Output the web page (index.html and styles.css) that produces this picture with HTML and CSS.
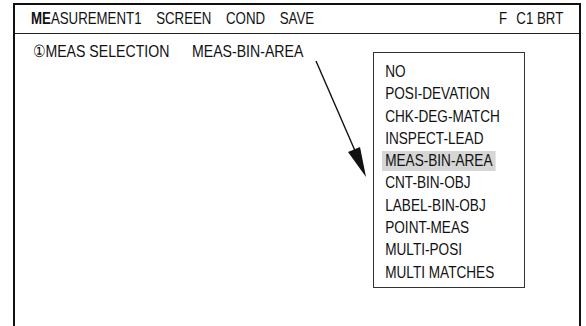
FILE: index.html
```html
<!DOCTYPE html>
<html lang="en">

<head>
  <meta charset="UTF-8">
  <meta name="viewport" content="width=device-width, initial-scale=1.0">
  <title>MEASUREMENT1</title>
  <link rel="stylesheet" href="styles.css">
</head>

<body>
  <div class="screen">
    <div class="header">
      <div class="title narrow">
        <span><b>ME</b>ASUREMENT1</span>
        <span>SCREEN</span>
        <span>COND</span>
        <span>SAVE</span>
      </div>
      <div class="status narrow">
        <span>F</span>
        <span>C1 BRT</span>
      </div>
    </div>
    <div class="content">
      <div class="row">
        <span class="label narrow">&#9312;MEAS SELECTION</span>
        <span class="value narrow">MEAS-BIN-AREA</span>
      </div>
      <ul class="menu">
        <li><span class="narrow">NO</span></li>
        <li><span class="narrow">POSI-DEVATION</span></li>
        <li><span class="narrow">CHK-DEG-MATCH</span></li>
        <li><span class="narrow">INSPECT-LEAD</span></li>
        <li class="active"><span class="narrow">MEAS-BIN-AREA</span></li>
        <li><span class="narrow">CNT-BIN-OBJ</span></li>
        <li><span class="narrow">LABEL-BIN-OBJ</span></li>
        <li><span class="narrow">POINT-MEAS</span></li>
        <li><span class="narrow">MULTI-POSI</span></li>
        <li><span class="narrow">MULTI MATCHES</span></li>
      </ul>
    </div>
  </div>
  <svg class="arrow" width="586" height="326" viewBox="0 0 586 326">
    <line x1="316" y1="61" x2="356" y2="153" stroke="#111" stroke-width="1.4" />
    <polygon points="366,177 360,147 348,152" fill="#111" />
  </svg>
</body>

</html>
```

FILE: styles.css
```css
body,
html {
  width: 100%;
  height: 100%;
  padding: 0;
  margin: 0;
  overflow: hidden;
  background: #fff;
}

body {
  font-family: "Liberation Sans", Arial, sans-serif;
  color: #111;
}

/* condensed look: no narrow face installed, so squeeze the glyphs */
.narrow {
  display: inline-block;
  white-space: nowrap;
  transform: scaleX(0.78);
  transform-origin: 0 50%;
}

.screen {
  box-sizing: border-box;
  margin: 3px 0 0 13px;
  width: 568px;
  height: 323px;
  border: 2px solid #111;
  border-bottom: none;
}

.header {
  display: flex;
  justify-content: space-between;
  align-items: center;
  height: 28px;
  padding: 0 16px 0 16px;
  border-bottom: 1.5px solid #222;
  font-size: 17px;
}

.title span + span {
  margin-left: 14px;
}

.status {
  transform-origin: 100% 50%;
}

.status span + span {
  margin-left: 7px;
}

.content {
  position: relative;
}

.row {
  display: flex;
  padding: 9px 0 0 18px;
  font-size: 17px;
  line-height: 18px;
}

.row .narrow {
  transform: scaleX(0.83);
}

.row .value {
  margin-left: -5px;
}

.menu {
  position: absolute;
  left: 358px;
  top: 18px;
  width: 142px;
  height: 226px;
  margin: 0;
  padding: 8px 0 0 8px;
  list-style-type: none;
  border: 1.5px solid #333;
  background: #fff;
  font-size: 17px;
}

.menu li {
  height: 22.3px;
  line-height: 22px;
}

.menu li span {
  padding: 0 4px;
  line-height: 20px;
  transform: scaleX(0.8);
}

.menu li.active span {
  background: #d6d6d6;
}

.arrow {
  position: absolute;
  left: 0;
  top: 0;
  pointer-events: none;
}
```
